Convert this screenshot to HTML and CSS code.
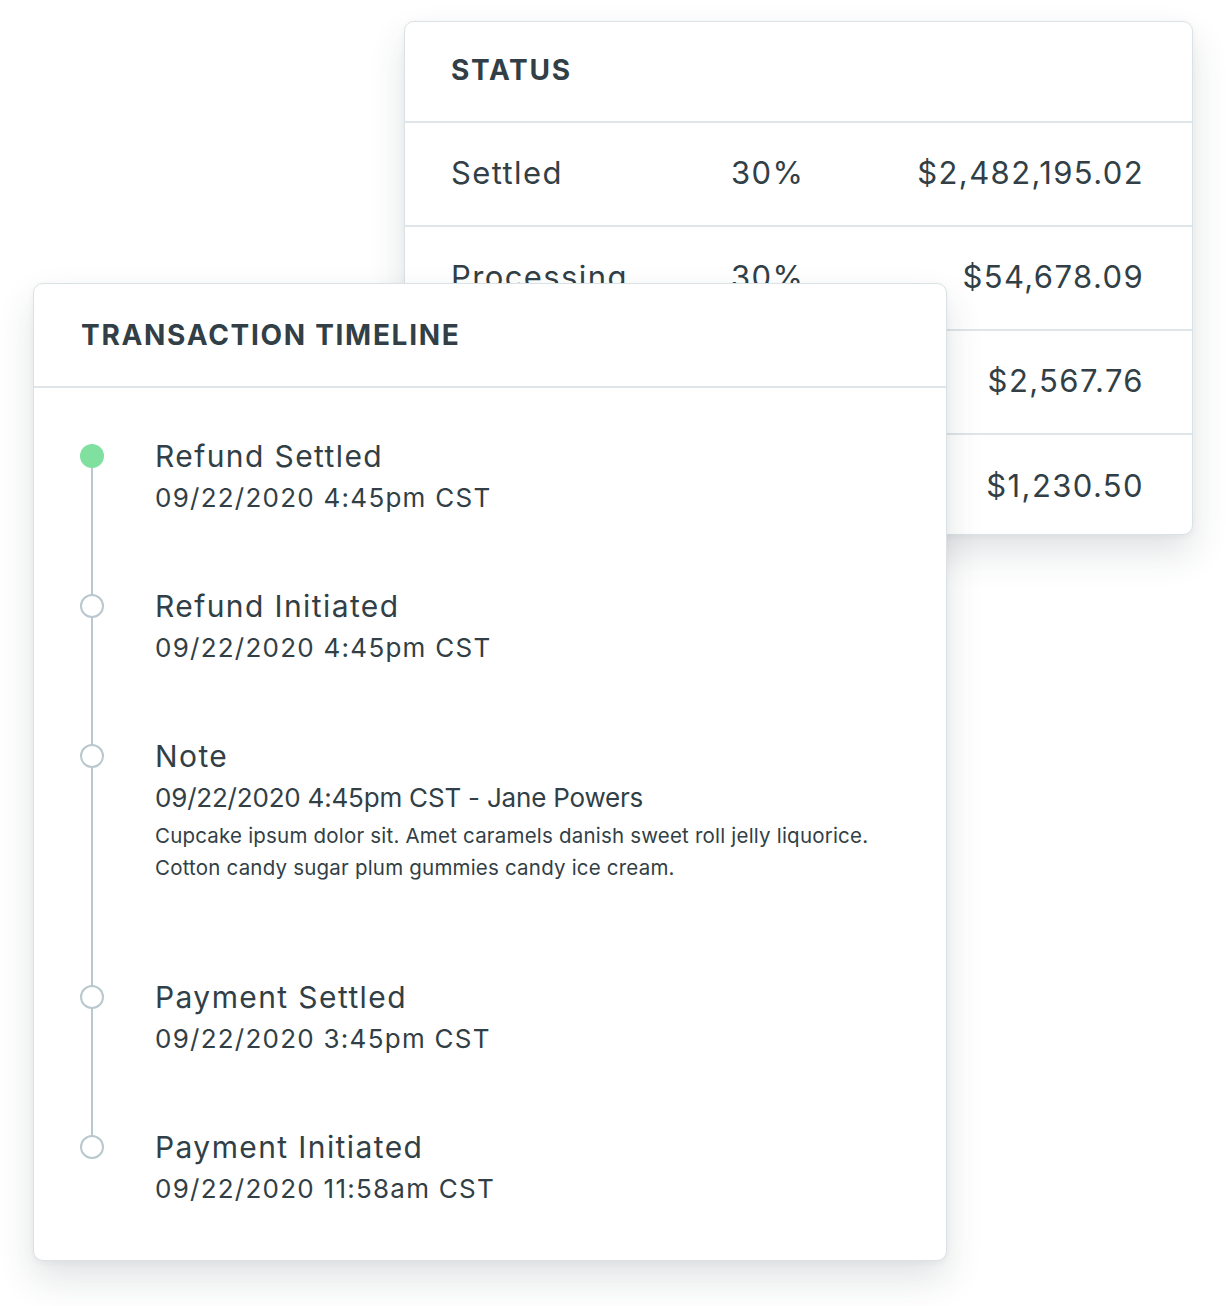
FILE: index.html
```html
<!DOCTYPE html>
<html lang="en">
<head>
<meta charset="utf-8">
<title>Transaction Timeline</title>
<link rel="stylesheet" href="styles.css">
</head>
<body>
<div class="canvas">
  <section class="card status-card">
    <header class="card-header"><h2 class="card-title">STATUS</h2></header>
    <div class="status-row"><span>Settled</span><span>30%</span><span class="amt">$2,482,195.02</span></div>
    <div class="status-row"><span>Processing</span><span>30%</span><span class="amt">$54,678.09</span></div>
    <div class="status-row"><span></span><span></span><span class="amt">$2,567.76</span></div>
    <div class="status-row"><span></span><span></span><span class="amt">$1,230.50</span></div>
  </section>

  <section class="card timeline-card">
    <header class="card-header"><h2 class="card-title">TRANSACTION TIMELINE</h2></header>
    <div class="timeline-body">
      <ul class="timeline">
        <li class="event">
          <span class="dot dot-active"></span>
          <div class="event-content">
            <div class="event-title">Refund Settled</div>
            <div class="event-date">09/22/2020 4:45pm CST</div>
          </div>
        </li>
        <li class="event">
          <span class="dot"></span>
          <div class="event-content">
            <div class="event-title">Refund Initiated</div>
            <div class="event-date">09/22/2020 4:45pm CST</div>
          </div>
        </li>
        <li class="event event-note">
          <span class="dot"></span>
          <div class="event-content">
            <div class="event-title">Note</div>
            <div class="event-date note-date">09/22/2020 4:45pm CST - Jane Powers</div>
            <p class="note-text">Cupcake ipsum dolor sit. Amet caramels danish sweet roll jelly liquorice.<br>Cotton candy sugar plum gummies candy ice cream.</p>
          </div>
        </li>
        <li class="event">
          <span class="dot"></span>
          <div class="event-content">
            <div class="event-title">Payment Settled</div>
            <div class="event-date">09/22/2020 3:45pm CST</div>
          </div>
        </li>
        <li class="event">
          <span class="dot"></span>
          <div class="event-content">
            <div class="event-title">Payment Initiated</div>
            <div class="event-date">09/22/2020 11:58am CST</div>
          </div>
        </li>
      </ul>
    </div>
  </section>
</div>
</body>
</html>
```

FILE: styles.css
```css
* { box-sizing: border-box; }
html, body { margin: 0; padding: 0; background: #ffffff; }
body {
  font-family: Inter, "Open Sans", "Liberation Sans", sans-serif;
  color: #323f46;
}
.canvas {
  position: relative;
  width: 1226px;
  height: 1306px;
  overflow: hidden;
}
.card {
  position: absolute;
  background: #ffffff;
  border: 1px solid #dbe2e5;
  border-radius: 10px;
  box-shadow: 0 18px 36px rgba(40, 55, 65, 0.14), 0 2px 6px rgba(40, 55, 65, 0.05);
  overflow: hidden;
}
.card-header {
  display: flex;
  align-items: center;
  border-bottom: 2px solid #dfe5e8;
}
.card-title {
  margin: 0;
  font-size: 28px;
  font-weight: 700;
  letter-spacing: 1.7px;
  line-height: 34px;
}

/* Status card */
.status-card {
  left: 404px;
  top: 21px;
  width: 789px;
  height: 514px;
}
.status-card .card-header {
  height: 101px;
  padding: 0 0 4px 46px;
}
.status-row {
  display: grid;
  grid-template-columns: 280px 1fr auto;
  align-items: center;
  height: 104px;
  padding: 0 48px 4px 46px;
  font-size: 31px;
  letter-spacing: 1.4px;
  border-bottom: 2px solid #dfe5e8;
}
.status-row:last-child { border-bottom: 0; }
.status-row .amt { text-align: right; }

/* Timeline card */
.timeline-card {
  left: 33px;
  top: 283px;
  width: 914px;
  height: 978px;
  z-index: 2;
}
.timeline-card .card-header {
  height: 104px;
  padding: 0 0 0 47px;
}
.timeline-body {
  padding: 48px 47px 0 46px;
}
.timeline {
  position: relative;
  list-style: none;
  margin: 0;
  padding: 0;
}
.timeline::before {
  content: "";
  position: absolute;
  left: 11px;
  width: 2px;
  top: 20px;
  bottom: 60px;
  background: #b9c8ce;
}
.event {
  position: relative;
  display: flex;
  align-items: flex-start;
  gap: 51px;
  margin-bottom: 70px;
}
.event:last-child { margin-bottom: 0; }
.dot {
  position: relative;
  z-index: 1;
  flex: 0 0 24px;
  width: 24px;
  height: 24px;
  margin-top: 8px;
  border-radius: 50%;
  background: #ffffff;
  border: 2px solid #b9c8ce;
}
.dot-active {
  background: #7fe09f;
  border: 0;
}
.event-title {
  font-size: 30px;
  line-height: 40px;
  letter-spacing: 1.4px;
}
.event-date {
  margin-top: 4px;
  font-size: 26px;
  line-height: 36px;
  letter-spacing: 1.25px;
}
.note-date { letter-spacing: -0.2px; }
.note-text {
  margin: 4px 0 0;
  font-size: 20.5px;
  line-height: 32px;
  letter-spacing: 0.2px;
}
.event-note { margin-bottom: 93px; }
```
